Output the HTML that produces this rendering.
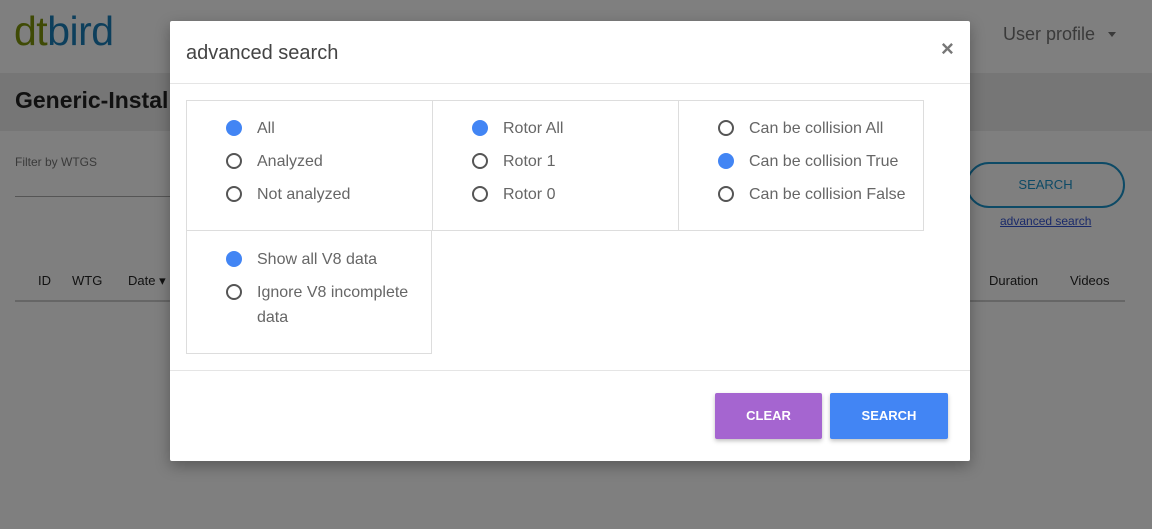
<!DOCTYPE html>
<html><head><meta charset="utf-8"><style>
*{box-sizing:border-box;margin:0;padding:0}
body{width:1152px;height:529px;overflow:hidden;background:#7f7f7f;font-family:"Liberation Sans",Arial,sans-serif;position:relative}
.a{position:absolute;white-space:nowrap}
.band{position:absolute;left:0;top:73px;width:1152px;height:58px;background:#767676}
.modal{position:absolute;left:170px;top:21px;width:800px;height:440px;background:#fff;border-radius:2px;box-shadow:0 5px 15px rgba(0,0,0,.3)}
.box{position:absolute;border:1px solid #ddd}
.r{position:absolute;font-size:16px;color:#666;line-height:20px}
.r i{position:absolute;left:-31px;top:1px;width:16px;height:16px;border-radius:50%;border:2px solid #555}
.r i.on{border:none;background:#4285f4}
.btn{position:absolute;color:#fff;font-size:13px;font-weight:bold;text-align:center;line-height:46px;border-radius:2px;box-shadow:0 2px 4px rgba(0,0,0,.25)}
</style></head><body>
<div class="band"></div>
<div class="a" style="left:14px;top:8px;font-size:41px;letter-spacing:-0.5px;line-height:46px"><span style="color:#3f4a05">dt</span><span style="color:#0d3f5c">bird</span></div>
<div class="a" style="left:1003px;top:24px;font-size:18px;color:#3a3a3a">User profile</div>
<div class="a" style="left:1108px;top:32px;border:4px solid transparent;border-top:5px solid #3a3a3a"></div>
<div class="a" style="left:15px;top:87px;font-size:23px;font-weight:bold;color:#111">Generic-Install</div>
<div class="a" style="left:15px;top:155px;font-size:12px;color:#3a3a3a">Filter by WTGS</div>
<div class="a" style="left:15px;top:196px;width:160px;height:1px;background:#555"></div>
<div class="a" style="left:966px;top:162px;width:159px;height:46px;border:2px solid #0d4a66;border-radius:24px;text-align:center;line-height:42px;font-size:13px;color:#0d4a66">SEARCH</div>
<div class="a" style="left:1000px;top:214px;font-size:12px;color:#1a2a6a;text-decoration:underline">advanced search</div>
<div class="a" style="left:38px;top:273px;font-size:13px;color:#111">ID</div>
<div class="a" style="left:72px;top:273px;font-size:13px;color:#111">WTG</div>
<div class="a" style="left:128px;top:273px;font-size:13px;color:#111">Date ▾</div>
<div class="a" style="left:989px;top:273px;font-size:13px;color:#111">Duration</div>
<div class="a" style="left:1070px;top:273px;font-size:13px;color:#111">Videos</div>
<div class="a" style="left:15px;top:300px;width:1110px;height:2px;background:#666"></div>
<div class="modal">
<div class="a" style="left:16px;top:21px;font-size:20px;color:#444">advanced search</div>
<div class="a" style="left:771px;top:15px;font-size:22px;font-weight:bold;color:#777">×</div>
<div class="a" style="left:0;top:62px;width:800px;height:1px;background:#e5e5e5"></div>
<div class="box" style="left:16px;top:79px;width:247px;height:131px"></div>
<div class="box" style="left:262px;top:79px;width:247px;height:131px"></div>
<div class="box" style="left:508px;top:79px;width:246px;height:131px"></div>
<div class="box" style="left:16px;top:209px;width:246px;height:124px"></div>
<div class="r" style="left:87px;top:98px"><i class="on"></i>All</div>
<div class="r" style="left:87px;top:131px"><i></i>Analyzed</div>
<div class="r" style="left:87px;top:164px"><i></i>Not analyzed</div>
<div class="r" style="left:333px;top:98px"><i class="on"></i>Rotor All</div>
<div class="r" style="left:333px;top:131px"><i></i>Rotor 1</div>
<div class="r" style="left:333px;top:164px"><i></i>Rotor 0</div>
<div class="r" style="left:579px;top:98px"><i></i>Can be collision All</div>
<div class="r" style="left:579px;top:131px"><i class="on"></i>Can be collision True</div>
<div class="r" style="left:579px;top:164px"><i></i>Can be collision False</div>
<div class="r" style="left:87px;top:229px"><i class="on"></i>Show all V8 data</div>
<div class="r" style="left:87px;top:259px;white-space:normal;width:160px;line-height:25px"><i style="top:4px"></i>Ignore V8 incomplete data</div>
<div class="a" style="left:0;top:349px;width:800px;height:1px;background:#e5e5e5"></div>
<div class="btn" style="left:545px;top:372px;width:107px;background:#a565d0">CLEAR</div>
<div class="btn" style="left:660px;top:372px;width:118px;background:#4285f4">SEARCH</div>
</div>
</body></html>
